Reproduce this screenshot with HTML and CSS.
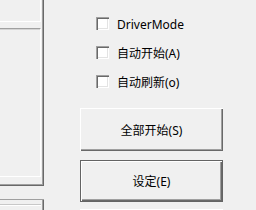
FILE: index.html
```html
<!DOCTYPE html>
<html>
<head>
<meta charset="utf-8">
<link rel="stylesheet" href="styles.css">
</head>
<body>
<div class="app">
  <div class="left">
    <div class="panel">
      <div class="box-a"></div>
      <div class="box-b"></div>
    </div>
    <div class="panel2">
      <div class="box-c"></div>
    </div>
  </div>
  <div class="right">
    <div class="checks">
      <label class="row"><span class="cb"></span><span class="lbl">DriverMode</span></label>
      <label class="row"><span class="cb"></span><span class="lbl">自动开始(A)</span></label>
      <label class="row"><span class="cb"></span><span class="lbl">自动刷新(o)</span></label>
    </div>
    <button class="btn btn-1">全部开始(S)</button>
    <button class="btn btn-default">设定(E)</button>
    <button class="btn btn-3"></button>
  </div>
</div>
</body>
</html>
```

FILE: styles.css
```css
html, body {
  margin: 0;
  padding: 0;
}
body {
  background: #f0f0f0;
  width: 256px;
  height: 210px;
  overflow: hidden;
  font-family: "Noto Sans", "Noto Sans CJK SC", sans-serif;
  font-size: 12px;
  color: #000;
}
.app {
  display: flex;
  width: 256px;
  height: 210px;
  overflow: hidden;
}
.left {
  width: 44px;
  flex: none;
  display: flex;
  flex-direction: column;
}
.panel {
  flex: none;
  height: 186px;
  box-sizing: border-box;
  box-shadow: inset -1px -1px #696969, inset -2px -2px #a0a0a0;
  display: flex;
  flex-direction: column;
}
.box-a {
  flex: none;
  width: 41px;
  height: 22px;
  box-sizing: border-box;
  border-right: 1px solid #fff;
  border-bottom: 1px solid #fff;
}
.box-b {
  flex: none;
  margin-top: 6px;
  width: 41px;
  height: 149px;
  box-sizing: border-box;
  border-top: 1px solid #a0a0a0;
  border-right: 1px solid #fff;
  border-bottom: 1px solid #fff;
  box-shadow: inset 0 1px #d4d4d4;
}
.panel2 {
  flex: none;
  margin-top: 13px;
  height: 40px;
  box-sizing: border-box;
  border-top: 1px solid #a0a0a0;
  box-shadow: inset -1px 0 #696969, inset -2px 0 #a0a0a0;
  padding-top: 4px;
}
.box-c {
  width: 41px;
  height: 20px;
  box-sizing: border-box;
  border-top: 1px solid #c8c8c8;
  box-shadow: inset 0 1px #fff;
}
.right {
  flex: 1;
  display: flex;
  flex-direction: column;
  padding-left: 36px;
}
.checks {
  flex: none;
  display: flex;
  flex-direction: column;
  padding-top: 9px;
  padding-left: 16px;
}
.row {
  flex: none;
  height: 29px;
  display: flex;
  align-items: center;
  gap: 8px;
}
.cb {
  width: 13px;
  height: 13px;
  flex: none;
  box-sizing: border-box;
  background: #fff;
  box-shadow: inset 1px 1px #a0a0a0, inset 2px 2px #696969, inset -1px -1px #fff, inset -2px -2px #e3e3e3;
}
.lbl {
  line-height: 16px;
  margin-top: 3px;
  white-space: nowrap;
}
.btn {
  flex: none;
  width: 143px;
  box-sizing: border-box;
  margin: 0;
  padding: 0;
  border: none;
  background: #f0f0f0;
  font-family: "Noto Sans", "Noto Sans CJK SC", sans-serif;
  font-size: 12px;
  color: #000;
  box-shadow: inset 1px 1px #fff, inset -1px -1px #696969, inset -2px -2px #a0a0a0;
}
.btn-1 {
  height: 43px;
  margin-top: 12px;
}
.btn-default {
  height: 42px;
  margin-top: 9px;
  border: 1px solid #646464;
}
.btn-3 {
  height: 30px;
  margin-top: 7px;
}
```
